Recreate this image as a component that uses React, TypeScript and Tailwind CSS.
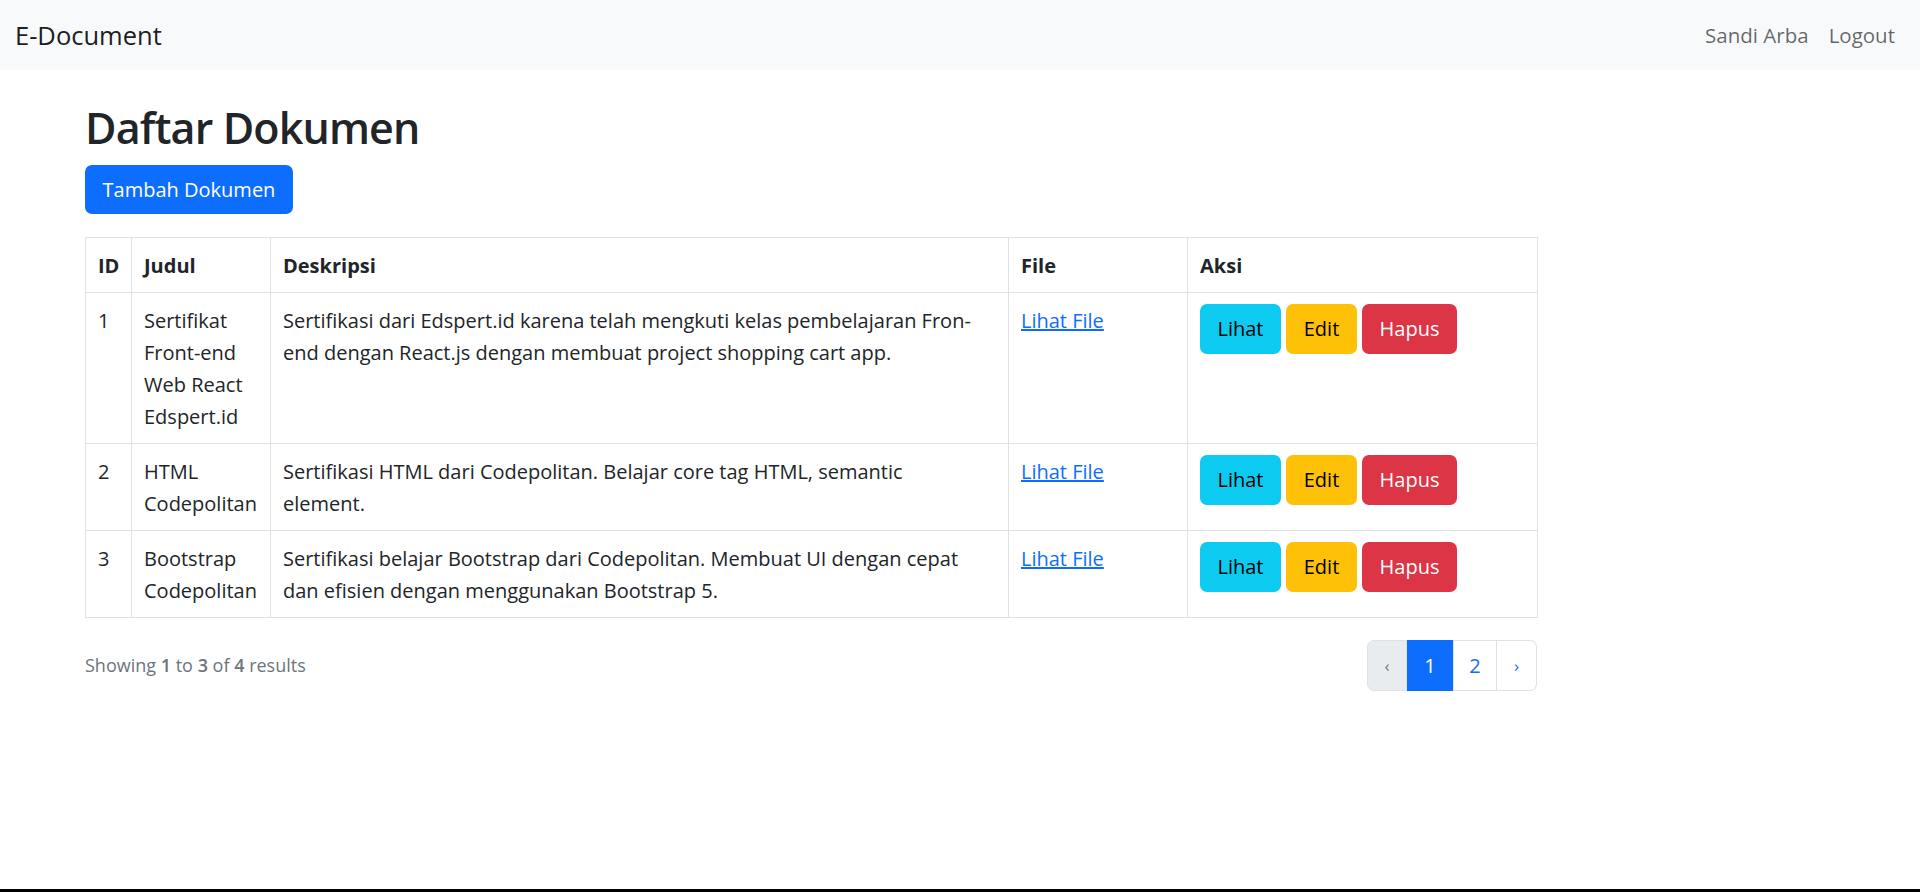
import React from "react";

const font = { fontFamily: '"Open Sans", "Noto Sans", Arial, sans-serif' };

type Row = { id: number; judul: string[]; desk: string[] };

const rows: Row[] = [
  {
    id: 1,
    judul: ["Sertifikat", "Front-end", "Web React", "Edspert.id"],
    desk: [
      "Sertifikasi dari Edspert.id karena telah mengkuti kelas pembelajaran Fron-",
      "end dengan React.js dengan membuat project shopping cart app.",
    ],
  },
  {
    id: 2,
    judul: ["HTML", "Codepolitan"],
    desk: ["Sertifikasi HTML dari Codepolitan. Belajar core tag HTML, semantic", "element."],
  },
  {
    id: 3,
    judul: ["Bootstrap", "Codepolitan"],
    desk: [
      "Sertifikasi belajar Bootstrap dari Codepolitan. Membuat UI dengan cepat",
      "dan efisien dengan menggunakan Bootstrap 5.",
    ],
  },
];

const cell = "border border-[#dee2e6] px-[12px] pt-[12px] pb-[10px] align-top leading-[32px]";

export default function App() {
  return (
    <div style={font} className="min-h-screen flex flex-col bg-white text-[#212529]">
      <nav className="h-[70px] bg-[#f8f9fa] flex items-center justify-between pl-[15px] pr-[15px]">
        <span className="text-[25.5px] text-[rgba(0,0,0,0.9)] leading-[30px]">E-Document</span>
        <div className="flex text-[20.5px] text-[rgba(0,0,0,0.6)]">
          <span className="px-[10px]">Sandi Arba</span>
          <span className="px-[10px]">Logout</span>
        </div>
      </nav>

      <main className="flex-1 ml-[85px] w-[1452px]">
        <h1 className="mt-[28px] h-[60px] leading-[60px] text-[43px] font-semibold tracking-[-0.02em]">Daftar Dokumen</h1>
        <button className="mt-[7px] h-[49px] w-[208px] rounded-[7px] bg-[#0d6efd] text-white text-[20px] flex items-center justify-center">
          Tambah Dokumen
        </button>

        <table className="mt-[23px] w-[1452px] table-fixed border-collapse text-[20px]">
          <colgroup>
            <col className="w-[46px]" />
            <col className="w-[139px]" />
            <col className="w-[738px]" />
            <col className="w-[179px]" />
            <col className="w-[350px]" />
          </colgroup>
          <thead>
            <tr className="text-left font-bold">
              <th className={cell}>ID</th>
              <th className={cell}>Judul</th>
              <th className={cell}>Deskripsi</th>
              <th className={cell}>File</th>
              <th className={cell}>Aksi</th>
            </tr>
          </thead>
          <tbody>
            {rows.map((r) => (
              <tr key={r.id}>
                <td className={cell}>{r.id}</td>
                <td className={cell}>
                  {r.judul.map((l, i) => (
                    <div key={i} className="whitespace-nowrap">
                      {l}
                    </div>
                  ))}
                </td>
                <td className={cell}>
                  {r.desk.map((l, i) => (
                    <div key={i}>{l}</div>
                  ))}
                </td>
                <td className={cell}>
                  <a href="#" className="text-[#0d6efd] underline">
                    Lihat File
                  </a>
                </td>
                <td className="border border-[#dee2e6] px-[12px] pt-[11px] pb-[11px] align-top">
                  <div className="flex gap-[5px]">
                    <button className="h-[50px] w-[81px] rounded-[7px] bg-[#0dcaf0] text-black text-[20px]">Lihat</button>
                    <button className="h-[50px] w-[71px] rounded-[7px] bg-[#ffc107] text-black text-[20px]">Edit</button>
                    <button className="h-[50px] w-[95px] rounded-[7px] bg-[#dc3545] text-white text-[20px]">Hapus</button>
                  </div>
                </td>
              </tr>
            ))}
          </tbody>
        </table>

        <div className="mt-[22px] flex items-center justify-between">
          <p className="text-[18px] text-[#6c757d]">
            Showing <span className="font-semibold">1</span> to <span className="font-semibold">3</span> of{" "}
            <span className="font-semibold">4</span> results
          </p>
          <div className="flex h-[51px] text-[20px]">
            <span className="w-[40px] flex items-center justify-center rounded-l-[7px] border border-[#dee2e6] bg-[#e9ecef] text-[#6c757d] text-[17px]">
              ‹
            </span>
            <span className="w-[46px] flex items-center justify-center bg-[#0d6efd] text-white border border-[#0d6efd]">1</span>
            <span className="w-[44px] flex items-center justify-center border border-[#dee2e6] text-[#0d6efd]">2</span>
            <span className="w-[40px] flex items-center justify-center rounded-r-[7px] border border-l-0 border-[#dee2e6] text-[#0d6efd] text-[17px]">
              ›
            </span>
          </div>
        </div>
      </main>

      <div className="h-[3px] bg-black" />
    </div>
  );
}
